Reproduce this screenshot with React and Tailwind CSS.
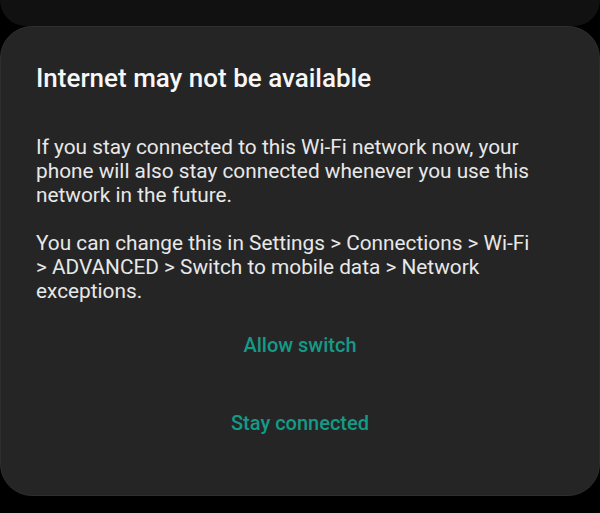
import React from "react";

export default function App() {
  return (
    <div
      className="w-[600px] h-[513px] bg-black overflow-hidden"
      style={{ fontFamily: "Roboto, 'Noto Sans', sans-serif" }}
    >
      {/* panel behind the dialog */}
      <div className="h-[26px] rounded-b-[28px] bg-[#111111]" />

      {/* dialog */}
      <div className="h-[470px] rounded-[32px] bg-[#252525] border border-[#2e2e2e] pt-[36px] pl-[35px]">
        <h1 className="text-[26px] leading-[30px] font-medium text-[#f7f7f7]">
          Internet may not be available
        </h1>

        <div className="mt-[42px] w-[505px] text-[20.8px] leading-[24px] text-[#e8e8e8]">
          <p>
            If you stay connected to this Wi-Fi network now, your phone will
            also stay connected whenever you use this network in the future.
          </p>
          <p className="mt-[24px]">
            You can change this in Settings &gt; Connections &gt; Wi-Fi &gt;
            ADVANCED &gt; Switch to mobile data &gt; Network exceptions.
          </p>
        </div>

        <div className="flex flex-col items-center mt-[30px] pr-[35px] text-[20px] leading-[24px] font-medium text-[#159a88]">
          <button className="block">Allow switch</button>
          <button className="block mt-[54px]">Stay connected</button>
        </div>
      </div>
    </div>
  );
}
